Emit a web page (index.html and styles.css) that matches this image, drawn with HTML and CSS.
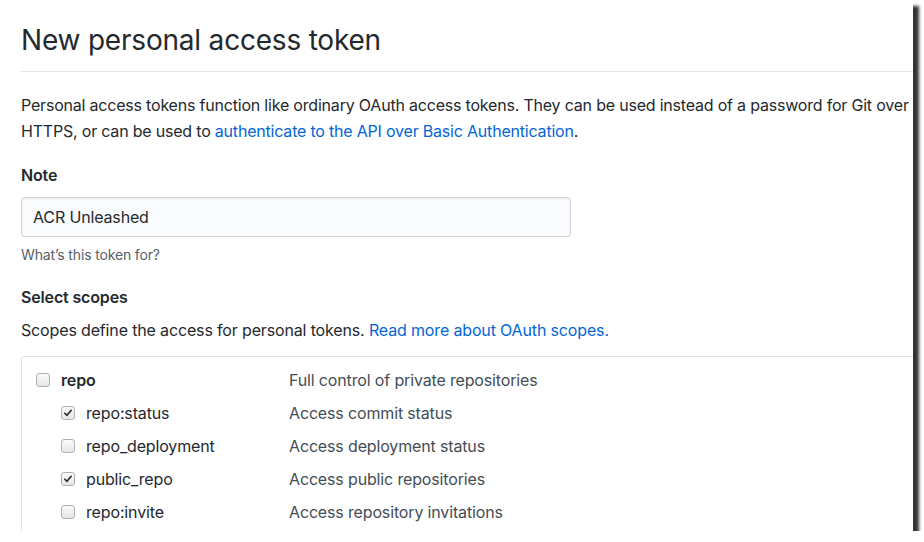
FILE: index.html
```html
<!DOCTYPE html>
<html>
<head>
<meta charset="utf-8">
<link rel="stylesheet" href="styles.css">
</head>
<body>
<div class="frame">
  <div class="page">
    <h1 class="title">New personal access token</h1>
    <p class="intro">Personal access tokens function like ordinary OAuth access tokens. They can be used instead of a password for Git over<br>HTTPS, or can be used to <a href="#">authenticate to the API over Basic Authentication</a>.</p>
    <div class="field">
      <label class="label">Note</label>
      <input class="input" type="text" value="ACR Unleashed">
      <p class="hint">What’s this token for?</p>
    </div>
    <div class="field">
      <div class="label label-scopes">Select scopes</div>
      <p class="desc">Scopes define the access for personal tokens. <a href="#">Read more about OAuth scopes.</a></p>
    </div>
    <div class="scopes">
      <div class="row">
        <div class="name parent"><span class="cb"></span><strong>repo</strong></div>
        <div class="info">Full control of private repositories</div>
      </div>
      <div class="row">
        <div class="name child"><span class="cb checked"><svg viewBox="0 0 12 12" width="10" height="10"><path d="M2.2 6.3 L4.8 8.8 L9.8 2.8" fill="none" stroke="#2b2b2b" stroke-width="2" stroke-linecap="round" stroke-linejoin="round"/></svg></span>repo:status</div>
        <div class="info">Access commit status</div>
      </div>
      <div class="row">
        <div class="name child"><span class="cb"></span>repo_deployment</div>
        <div class="info">Access deployment status</div>
      </div>
      <div class="row">
        <div class="name child"><span class="cb checked"><svg viewBox="0 0 12 12" width="10" height="10"><path d="M2.2 6.3 L4.8 8.8 L9.8 2.8" fill="none" stroke="#2b2b2b" stroke-width="2" stroke-linecap="round" stroke-linejoin="round"/></svg></span>public_repo</div>
        <div class="info">Access public repositories</div>
      </div>
      <div class="row">
        <div class="name child"><span class="cb"></span>repo:invite</div>
        <div class="info">Access repository invitations</div>
      </div>
    </div>
  </div>
</div>
</body>
</html>
```

FILE: styles.css
```css
html, body {
  margin: 0;
  padding: 0;
  background: #ffffff;
}
.frame {
  width: 913px;
  height: 531px;
  overflow: hidden;
  background: #ffffff;
  box-shadow: 6px 6px 3px rgba(0, 0, 0, 0.8);
}
.page {
  width: 960px;
  padding: 22px 0 0 21px;
  font-family: "Inter", "Liberation Sans", sans-serif;
  color: #24292e;
  font-size: 16px;
  line-height: 26px;
  letter-spacing: -0.15px;
}
.title {
  margin: 0;
  font-size: 28px;
  font-weight: 400;
  line-height: 36px;
  padding-bottom: 13px;
  border-bottom: 1px solid #e1e4e8;
  letter-spacing: -0.2px;
}
.intro {
  margin: 20px 0 0;
  white-space: nowrap;
  letter-spacing: -0.2px;
}
a {
  color: #0366d6;
  text-decoration: none;
}
.field {
  display: flex;
  flex-direction: column;
  align-items: flex-start;
}
.label {
  margin-top: 18px;
  font-weight: 600;
}
.label-scopes {
  margin-top: 19px;
}
.input {
  margin: 9px 0 0;
  box-sizing: border-box;
  width: 550px;
  height: 40px;
  padding: 0 11px;
  border: 1px solid #d1d5da;
  border-radius: 3px;
  background: #fafbfc;
  font-family: inherit;
  font-size: 16px;
  letter-spacing: -0.15px;
  color: #24292e;
  box-shadow: inset 0 1px 2px rgba(27, 31, 35, 0.075);
}
.hint {
  margin: 8px 0 0;
  font-size: 14px;
  line-height: 20px;
  color: #586069;
}
.desc {
  margin: 7px 0 0;
}
.scopes {
  margin-top: 13px;
  border: 1px solid #e1e4e8;
  border-radius: 3px;
  padding: 6px 0 10px;
}
.row {
  display: flex;
  height: 33px;
  align-items: center;
}
.name {
  box-sizing: border-box;
  display: flex;
  align-items: center;
  width: 267px;
  flex: none;
}
.parent {
  padding-left: 14px;
}
.child {
  padding-left: 39px;
}
.name strong {
  font-weight: 600;
}
.cb {
  box-sizing: border-box;
  width: 14px;
  height: 14px;
  margin-right: 11px;
  border: 1px solid #b0b0b0;
  border-radius: 3px;
  background: linear-gradient(#fafafa, #e6e6e6);
  display: flex;
  align-items: center;
  justify-content: center;
}
.info {
  color: #444d56;
}
```
